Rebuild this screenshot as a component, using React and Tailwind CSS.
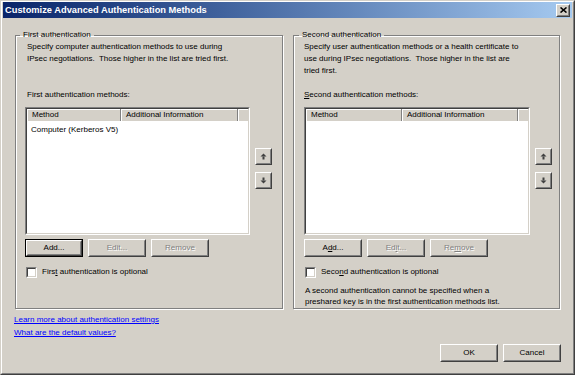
import React from "react";

const font = { fontFamily: '"Liberation Sans", Arial, sans-serif' };

function Btn({ children, disabled, isDefault, className = "" }) {
  return (
    <div
      className={
        "flex items-center justify-center bg-[#d4d0c8] " +
        (isDefault ? "border border-[#000] " : "") +
        className
      }
    >
      <div className="flex h-full w-full items-center justify-center border border-t-white border-l-white border-r-[#404040] border-b-[#404040]">
        <div className="flex h-full w-full items-center justify-center border border-t-[#d4d0c8] border-l-[#d4d0c8] border-r-[#808080] border-b-[#808080]">
          <span
            className={
              disabled
                ? "text-[#808080] [text-shadow:1px_1px_0_#fff]"
                : "text-black"
            }
          >
            {children}
          </span>
        </div>
      </div>
    </div>
  );
}

function ArrowBtn({ down }) {
  return (
    <div className="h-[17px] w-[17px] border border-t-white border-l-white border-r-[#404040] border-b-[#404040] bg-[#d4d0c8]">
      <div className="flex h-full w-full items-center justify-center border border-t-[#d4d0c8] border-l-[#d4d0c8] border-r-[#808080] border-b-[#808080]">
        <svg width="7" height="7" viewBox="0 0 7 7" className={down ? "rotate-180" : ""}>
          <polygon points="3.5,0.5 6.5,3.5 0.5,3.5" fill="#404040" />
          <rect x="2.5" y="3.5" width="2" height="3" fill="#404040" />
        </svg>
      </div>
    </div>
  );
}

function Checkbox() {
  return (
    <div className="h-[11px] w-[11px] border border-t-[#808080] border-l-[#808080] border-r-white border-b-white">
      <div className="h-full w-full border border-t-[#404040] border-l-[#404040] border-r-[#d4d0c8] border-b-[#d4d0c8] bg-white" />
    </div>
  );
}

function ListBox({ rows, width, col1, col2 }) {
  return (
    <div
      className="h-[128px] border border-t-[#808080] border-l-[#808080] border-r-white border-b-white"
      style={{ width }}
    >
      <div className="flex h-full w-full flex-col border border-t-[#404040] border-l-[#404040] border-r-[#d4d0c8] border-b-[#d4d0c8] bg-white">
        <div className="flex h-[12px] shrink-0">
          <div
            className="flex items-center border-r border-r-[#808080] bg-[#d4d0c8] pl-[5px] shadow-[inset_1px_1px_0_#fff]"
            style={{ width: col1 }}
          >
            Method
          </div>
          <div
            className="flex items-center border-r border-r-[#808080] bg-[#d4d0c8] pl-[5px] shadow-[inset_1px_1px_0_#fff]"
            style={{ width: col2 }}
          >
            Additional Information
          </div>
          <div className="flex-1 bg-[#d4d0c8] shadow-[inset_1px_1px_0_#fff]" />
        </div>
        <div className="pt-[2px]">
          {rows.map((r) => (
            <div key={r} className="h-[13px] pl-[4px] leading-[13px]">
              {r}
            </div>
          ))}
        </div>
      </div>
    </div>
  );
}

function Group({ first, legend, width, padL, descPad, desc, listLabel, rows, listW, col1, col2, checkLabel, note }) {
  return (
    <fieldset
      className="h-[280px] border border-[#808080] shadow-[inset_1px_1px_0_#fff,1px_1px_0_#fff]"
      style={{ width, paddingLeft: padL }}
    >
      <legend className="-ml-[5px] px-[3px] leading-[12px]">{legend}</legend>
      <div className="h-[48px] leading-[12px]" style={{ paddingLeft: descPad }}>
        {desc}
      </div>
      <div className="leading-[12px]" style={{ paddingLeft: descPad }}>
        {listLabel}
      </div>
      <div className="mt-[6px] flex">
        <ListBox rows={rows} width={listW} col1={col1} col2={col2} />
        <div className="ml-[5px] flex flex-col gap-[7px] pt-[41px]">
          <ArrowBtn />
          <ArrowBtn down />
        </div>
      </div>
      <div className="mt-[4px] flex gap-[5px]">
        <Btn isDefault={first} className="h-[18px] w-[58px]">
          {first ? "Add..." : <span>A<u>d</u>d...</span>}
        </Btn>
        <Btn disabled className="h-[18px] w-[58px]">
          {first ? "Edit..." : <span>Ed<u>i</u>t...</span>}
        </Btn>
        <Btn disabled className="h-[18px] w-[58px]">
          {first ? "Remove" : <span>Re<u>m</u>ove</span>}
        </Btn>
      </div>
      <div className="mt-[9px] flex items-center gap-[5px] pl-[1px]">
        <Checkbox />
        <span className="leading-[12px]">{checkLabel}</span>
      </div>
      {note && <div className="mt-[7px] pl-[1px] leading-[11px]">{note}</div>}
    </fieldset>
  );
}

export default function App() {
  return (
    <div
      className="relative h-[375px] w-[575px] overflow-hidden border border-t-[#d4d0c8] border-l-[#d4d0c8] border-r-[#404040] border-b-[#404040] bg-[#d4d0c8] text-[8px] text-black"
      style={font}
    >
      <div className="h-full w-full border border-t-white border-l-white border-r-[#808080] border-b-[#808080]">
        <div className="mx-[1px] flex h-[16px] items-center justify-between bg-gradient-to-r from-[#0a246a] to-[#a6caf0] pl-[2px] pr-[2px]">
          <span className="pt-[1px] text-[9.3px] font-bold text-white">
            Customize Advanced Authentication Methods
          </span>
          <div className="h-[13px] w-[14px] border border-t-white border-l-white border-r-[#404040] border-b-[#404040] bg-[#d4d0c8]">
            <div className="flex h-full w-full items-center justify-center border border-t-[#d4d0c8] border-l-[#d4d0c8] border-r-[#808080] border-b-[#808080]">
              <svg width="7" height="6" viewBox="0 0 7 6">
                <path d="M0.5 0.5 L6.5 5.5 M6.5 0.5 L0.5 5.5" stroke="#000" strokeWidth="1.6" />
              </svg>
            </div>
          </div>
        </div>
        <div className="mt-[11px] flex gap-[10px] pl-[13px]">
          <Group
            first
            legend="First authentication"
            width={268}
            padL={9}
            descPad={2}
            desc={
              <>
                Specify computer authentication methods to use during
                <br />
                IPsec negotiations.&nbsp; Those higher in the list are tried first.
              </>
            }
            listLabel="First authentication methods:"
            rows={["Computer (Kerberos V5)"]}
            listW={225}
            col1={94}
            col2={117}
            checkLabel={<span>Firs<u>t</u> authentication is optional</span>}
          />
          <Group
            legend="Second authentication"
            width={267}
            padL={10}
            descPad={0}
            desc={
              <>
                Specify user authentication methods or a health certificate to
                <br />
                use during IPsec negotiations.&nbsp; Those higher in the list are
                <br />
                tried first.
              </>
            }
            listLabel={<span><u>S</u>econd authentication methods:</span>}
            rows={[]}
            listW={226}
            col1={96}
            col2={116}
            checkLabel={<span>Seco<u>n</u>d authentication is optional</span>}
            note={
              <>
                A second authentication cannot be specified when a
                <br />
                preshared key is in the first authentication methods list.
              </>
            }
          />
        </div>
        <div className="mt-[4px] flex flex-col pl-[12px] leading-[13px] text-[#0000ff]">
          <span className="underline">Learn more about authentication settings</span>
          <span className="underline">What are the default values?</span>
        </div>
        <div className="mt-[5px] flex justify-end gap-[5px] pr-[12px]">
          <Btn className="h-[18px] w-[58px]">OK</Btn>
          <Btn className="h-[18px] w-[58px]">Cancel</Btn>
        </div>
      </div>
    </div>
  );
}
